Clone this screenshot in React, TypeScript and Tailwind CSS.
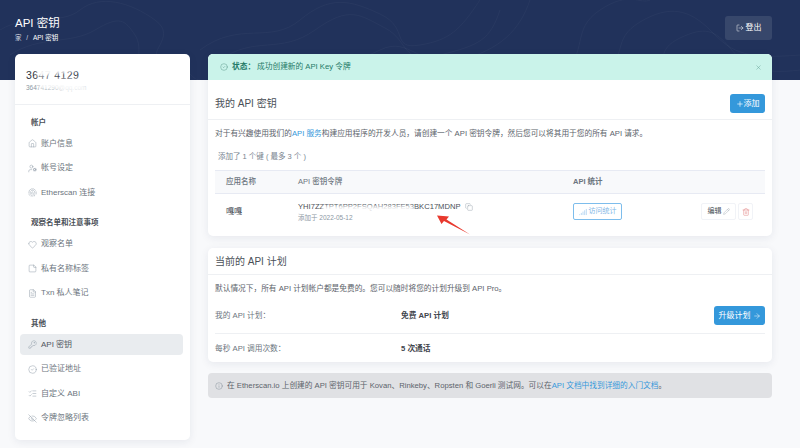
import {
  ArrowRight,
  Signal,
  CheckCircle2,
  Copy,
  EyeOff,
  FileText,
  Heart,
  Home,
  Info,
  KeyRound,
  ListChecks,
  LogOut,
  Pencil,
  Plus,
  StickyNote,
  Trash2,
  UserCog,
  X,
  Fingerprint,
} from 'lucide-react';

const groups = [
  {
    title: '帐户',
    items: [
      { label: '账户信息', icon: Home },
      { label: '帐号设定', icon: UserCog },
      { label: 'Etherscan 连接', icon: Fingerprint },
    ],
  },
  {
    title: '观察名单和注意事项',
    items: [
      { label: '观察名单', icon: Heart },
      { label: '私有名称标签', icon: StickyNote },
      { label: 'Txn 私人笔记', icon: FileText },
    ],
  },
  {
    title: '其他',
    items: [
      { label: 'API 密钥', icon: KeyRound, active: true },
      { label: '已验证地址', icon: CheckCircle2 },
      { label: '自定义 ABI', icon: ListChecks },
      { label: '令牌忽略列表', icon: EyeOff },
    ],
  },
];

function Sidebar() {
  return (
    <aside className="w-[175px] h-[386px] shrink-0 bg-white rounded-[5px] shadow-[0_2px_8px_rgba(30,40,80,0.08)] overflow-hidden">
      {/* Account, smudged in the picture */}
      <div className="relative h-[51px] px-[11px] pt-[14px] border-b border-[#eef0f3]">
        <div className="text-[10.5px] leading-[14px] text-[#2f3540] tracking-[0.4px]">3647 4129</div>
        <div className="text-[6.5px] leading-[10px] text-[#8c98a4] mt-[1px]">364741290@qq.com</div>
        <div className="absolute left-[22px] top-[13px] w-[40px] h-[7px] bg-white/95 blur-[1.5px] rotate-[-8deg]" />
        <div className="absolute left-[24px] top-[25px] w-[46px] h-[10px] bg-white/90 blur-[2px]" />
        <div className="absolute left-[44px] top-[30px] w-[50px] h-[14px] bg-white/70 blur-[3px]" />
      </div>
      <nav className="pl-[5px] pr-[7px] pt-[7px]">
        {groups.map((group) => (
          <div key={group.title} className="mb-[9.6px]">
            <div className="h-[21px] pl-[11px] flex items-center text-[7.5px] font-bold text-[#4a4f57]">
              {group.title}
            </div>
            {group.items.map((item) => (
              <div
                key={item.label}
                className={`h-[21px] mb-[3.5px] pl-[8px] flex items-center gap-[3px] rounded-[4px] text-[8px] text-[#6c757e] ${
                  item.active ? 'bg-[#e9ecef] text-[#50565e]' : ''
                }`}
              >
                <item.icon className="w-[9px] h-[9px] text-[#8c98a4] shrink-0" strokeWidth={1.25} />
                <span className="ml-[1px]">{item.label}</span>
              </div>
            ))}
          </div>
        ))}
      </nav>
    </aside>
  );
}

function Contours() {
  return (
    <svg className="absolute inset-0 w-full h-full" viewBox="0 0 800 80" fill="none" stroke="#ffffff" strokeOpacity="0.06" strokeWidth="0.6">
      <path d="M0 30C30 12 60 26 80 10S130 2 155 20 140 55 165 60 190 80 200 80" />
      <path d="M10 55C40 35 70 45 95 30S125 20 135 35 130 65 150 80" />
      <path d="M200 50C240 20 270 45 300 20S350 0 380 14 390 50 420 45 460 30 480 0" />
      <path d="M220 60C255 35 280 55 315 30S360 15 385 28 400 65 440 55 490 40 500 10" />
      <path d="M300 80C330 60 350 65 380 50S420 70 460 60 520 30 530 0" />
      <path d="M560 80C590 50 570 30 600 10S640 5 650 0" />
      <path d="M600 80C630 55 610 40 640 22S690 10 710 30 740 60 800 55" />
      <path d="M650 80C670 60 655 50 680 38S715 30 730 48 760 75 800 70" />
    </svg>
  );
}

function Header() {
  return (
    <header className="relative h-[80px] bg-[#21325b] overflow-hidden">
      <Contours />
      <div className="relative flex items-start justify-between pl-[15px] pr-[28px] pt-[16px]">
        <div>
          <h1 className="text-[11.5px] leading-[14px] text-white">API 密钥</h1>
          <div className="mt-[3px] text-[6.5px] leading-[9px] text-[#d5dae2]">
            家 <span className="mx-[3px]">/</span> <span className="text-white">API 密钥</span>
          </div>
        </div>
        <button className="w-[47px] h-[24px] flex items-center justify-center gap-[2px] rounded-[3px] bg-white/10 text-[8px] text-white">
          <LogOut className="w-[8px] h-[8px]" strokeWidth={1.5} />
          登出
        </button>
      </div>
    </header>
  );
}

function KeysCard() {
  return (
    <section className="bg-white rounded-[5px] shadow-[0_2px_8px_rgba(30,40,80,0.08)] overflow-hidden">
      <div className="h-[26px] pl-[12px] pr-[10px] flex items-center bg-[#caf3ea] text-[7.7px] text-[#1f7a67]">
        <CheckCircle2 className="w-[8px] h-[8px] text-[#4a8a7c]" strokeWidth={1.25} />
        <b className="ml-[4px] font-bold">状态：</b>
        <span className="ml-[2px]">成功创建新的 API Key 令牌</span>
        <X className="w-[7px] h-[7px] ml-auto text-[#5f9c90]" strokeWidth={1.5} />
      </div>
      <div className="h-[40px] px-[7px] pt-[8px] flex items-center justify-between border-b border-[#eef0f3]">
        <h2 className="text-[10px] text-[#4a4f57]">我的 API 密钥</h2>
        <button className="w-[35px] h-[19px] flex items-center justify-center rounded-[3px] bg-[#3498db] text-[8px] text-white">
          <Plus className="w-[8px] h-[8px]" strokeWidth={2} />
          添加
        </button>
      </div>
      <p className="px-[7px] pt-[8px] h-[27px] text-[7.7px] leading-[12px] text-[#5c636b]">
        对于有兴趣使用我们的<span className="text-[#3498db]">API 服务</span>构建应用程序的开发人员，请创建一个 API 密钥令牌，然后您可以将其用于您的所有 API 请求。
      </p>
      <p className="px-[10px] pt-[4px] h-[23px] text-[7.5px] leading-[12px] text-[#77838f]">添加了 1 个键 ( 最多 3 个 )</p>
      <div className="mx-[7px] flex h-[24px] items-center bg-[#f8f9fb] border-y border-[#e7eaf3] text-[7.5px] font-medium text-[#6c757e]">
        <div className="w-[83px] pl-[11px]">应用名称</div>
        <div className="w-[275px]">API 密钥令牌</div>
        <div className="font-bold">API 统计</div>
      </div>
      <div className="relative mx-[7px] flex h-[42px] pb-[7px] items-center text-[8px] text-[#4a4f57]">
        <div className="w-[83px] pl-[11px]">嘎嘎</div>
        <div className="w-[275px]">
          <div className="flex items-center gap-[5px] leading-[10px]">
            <span className="relative text-[7.6px]">
              YHI7ZZTPT6PP2FSQAH283FE53BKC17MDNP
              <span className="absolute left-[24px] top-[4px] w-[92px] h-[6px] bg-white/90 blur-[1.5px]" />
            </span>
            <Copy className="w-[8px] h-[8px] text-[#8c98a4]" strokeWidth={1.25} />
          </div>
          <div className="mt-[1px] text-[6.5px] leading-[9px] text-[#8c98a4]">添加于 2022-05-12</div>
        </div>
        <button className="w-[49px] h-[17px] flex items-center justify-center gap-[2px] rounded-[2px] border border-[#7dbdec] text-[7px] text-[#7fb6e6]">
          <Signal className="w-[8px] h-[8px]" strokeWidth={1.5} />
          访问统计
        </button>
        <div className="ml-auto mr-[12px] flex gap-[2px]">
          <button className="w-[35px] h-[17px] flex items-center justify-center gap-[1px] rounded-[2px] border border-[#f1f3f7] text-[7px] text-[#4a4f57]">
            编辑
            <Pencil className="w-[7px] h-[7px] text-[#8c98a4]" strokeWidth={1.25} />
          </button>
          <button className="w-[15px] h-[17px] flex items-center justify-center rounded-[2px] border border-[#f1f3f7]">
            <Trash2 className="w-[8px] h-[8px] text-[#de6a6a]" strokeWidth={1.25} />
          </button>
        </div>
        <svg className="absolute left-[222px] top-[21px] w-[33px] h-[20px]" viewBox="0 0 33 20">
          <path d="M0 0.5L12 1.5 9.5 4.5 33 19.5 7 6 4.5 9Z" fill="#e8392e" />
        </svg>
      </div>
    </section>
  );
}

function PlanCard() {
  return (
    <section className="mt-[12px] h-[114px] bg-white rounded-[5px] shadow-[0_2px_8px_rgba(30,40,80,0.08)]">
      <h2 className="h-[27px] px-[7px] flex items-center border-b border-[#eef0f3] text-[10px] text-[#4a4f57]">当前的 API 计划</h2>
      <p className="px-[7px] pt-[8px] h-[25px] text-[7.7px] leading-[12px] text-[#5c636b]">
        默认情况下，所有 API 计划帐户都是免费的。您可以随时将您的计划升级到 API Pro。
      </p>
      <div className="mx-[7px] h-[34px] pb-[2px] flex items-center border-b border-[#eef0f3] text-[7.7px]">
        <div className="w-[186px] text-[#6c757e]">我的 API 计划：</div>
        <b className="font-bold text-[#3f454d]">免费 API 计划</b>
        <button className="ml-auto w-[51px] h-[19px] flex items-center justify-center gap-[2px] rounded-[3px] bg-[#3498db] text-[8px] text-white">
          升级计划
          <ArrowRight className="w-[8px] h-[8px]" strokeWidth={1.5} />
        </button>
      </div>
      <div className="mx-[7px] h-[28px] pt-[2px] flex items-center text-[7.7px]">
        <div className="w-[186px] text-[#6c757e]">每秒 API 调用次数：</div>
        <b className="font-bold text-[#3f454d]">5 次通话</b>
      </div>
    </section>
  );
}

export default function App() {
  return (
    <div className="w-[800px] h-[448px] overflow-hidden bg-[#f8f9fb] font-['Liberation_Sans','Noto_Sans_CJK_SC',sans-serif]">
      <Header />
      <div className="relative -mt-[26px] flex gap-[18px] pl-[15px] pr-[28px]">
        <Sidebar />
        <main className="flex-1 min-w-0">
          <KeysCard />
          <PlanCard />
          <div className="mt-[11px] h-[25px] px-[7px] flex items-center gap-[4px] rounded-[4px] bg-[#e0e1e4] text-[7.7px] text-[#5c636b]">
            <Info className="w-[8px] h-[8px] text-[#77838f]" strokeWidth={1.25} />
            <span>
              在 Etherscan.io 上创建的 API 密钥可用于 Kovan、Rinkeby、Ropsten 和 Goerli 测试网。可以在
              <span className="text-[#3498db]">API 文档中找到详细的入门文档</span>。
            </span>
          </div>
        </main>
      </div>
    </div>
  );
}
